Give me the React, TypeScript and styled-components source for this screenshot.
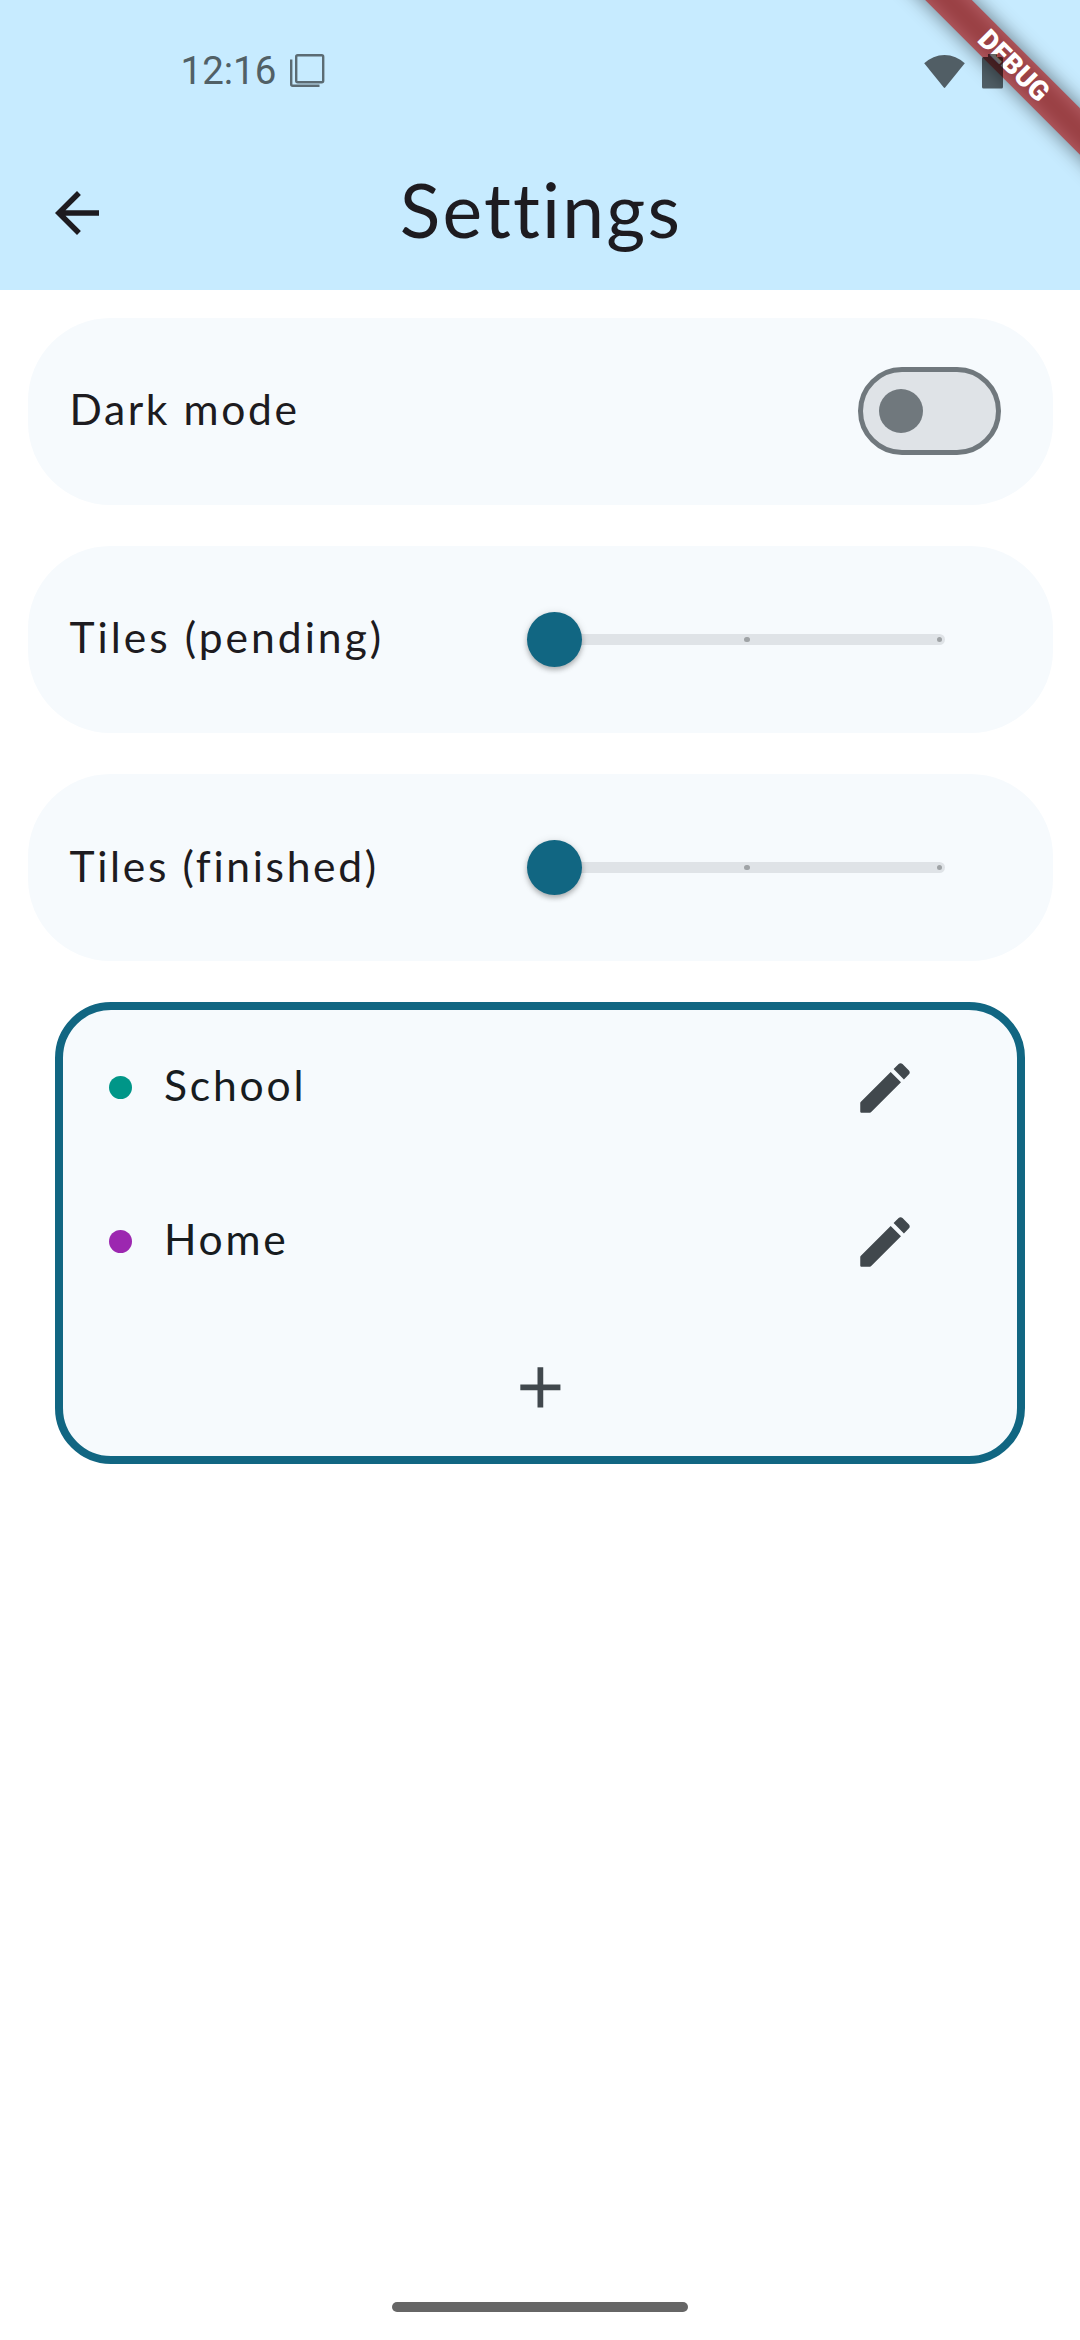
import React from 'react';
import styled, { createGlobalStyle } from 'styled-components';

const GlobalStyle = createGlobalStyle`
  *, *::before, *::after { box-sizing: border-box; }
  html, body { margin: 0; padding: 0; background: #fff; overflow: hidden; }
  svg { display: block; }
`;

const Screen = styled.div`
  position: relative;
  display: flex;
  flex-direction: column;
  width: 1080px;
  height: 2340px;
  overflow: hidden;
  background: #fff;
  font-family: Lato, 'Open Sans', sans-serif;
  color: #1d1b20;
`;

const Header = styled.header`
  height: 290px;
  background: #c7ebff;
  display: flex;
  flex-direction: column;
`;

const StatusBar = styled.div`
  height: 136px;
  padding: 5px 77px 0 180.5px;
  display: flex;
  align-items: center;
  justify-content: space-between;
`;

const StatusGroup = styled.div<{ $gap: number }>`
  display: flex;
  align-items: center;
  gap: ${(p) => p.$gap}px;
`;

const Clock = styled.span`
  font: 400 38.5px/46px Roboto, sans-serif;
  color: #516066;
`;

const StatusIcons = styled(StatusGroup)`
  position: relative;
  z-index: 3;
`;

const Toolbar = styled.div`
  height: 154px;
  padding: 0 44px;
  display: grid;
  grid-template-columns: 66px 1fr 66px;
  align-items: center;
`;

const IconButton = styled.button`
  display: flex;
  padding: 0;
  border: 0;
  background: none;
  color: inherit;
`;

const Title = styled.h1`
  margin: 0;
  padding: 0 0 8px 2px;
  text-align: center;
  font-size: 75px;
  line-height: 90px;
  font-weight: 400;
  letter-spacing: 2.2px;
`;

const Content = styled.main`
  display: flex;
  flex-direction: column;
  padding-top: 27.5px;
`;

const Card = styled.section`
  height: 187px;
  margin: 0 27.5px 41.25px;
  padding: 0 52px 0 42px;
  border-radius: 82.5px;
  background: #f6fafd;
  display: flex;
  align-items: center;
  justify-content: space-between;
`;

const Label = styled.span<{ $spacing: number }>`
  padding-bottom: 4px;
  font-size: 42.6px;
  line-height: 52px;
  letter-spacing: ${(p) => p.$spacing}px;
  white-space: nowrap;
`;

const Switch = styled.div`
  width: 143px;
  height: 88px;
  padding-left: 16.5px;
  border: 5.5px solid #70787d;
  border-radius: 44px;
  background: #dfe3e7;
  display: flex;
  align-items: center;
`;

const Knob = styled.span`
  width: 44px;
  height: 44px;
  border-radius: 50%;
  background: #70787d;
`;

const SliderTrack = styled.div`
  width: 398px;
  height: 11px;
  margin-right: 55.5px;
  padding-right: 2.75px;
  border-radius: 6px;
  background: #dfe3e7;
  display: flex;
  align-items: center;
  justify-content: space-between;
`;

const Thumb = styled.span`
  width: 55px;
  height: 55px;
  margin-left: -19.8px;
  border-radius: 50%;
  background: #116682;
  box-shadow: 0 3px 5px rgba(0, 0, 0, 0.24), 0 1px 8px rgba(0, 0, 0, 0.12);
`;

const Tick = styled.span`
  width: 5.5px;
  height: 5.5px;
  border-radius: 50%;
  background: #9fa3a6;
`;

const MiddleTick = styled(Tick)`
  margin-left: -25px;
`;

const CategoryBox = styled.section`
  height: 462px;
  margin: 0 55px;
  border: 8.25px solid #116682;
  border-radius: 56px;
  background: #f6fafd;
  color: #171c1f;
`;

const CategoryRow = styled.div`
  height: 154px;
  padding: 0 99.5px 0 46px;
  display: flex;
  align-items: center;
`;

const Dot = styled.span<{ $color: string }>`
  width: 23px;
  height: 23px;
  margin-right: 32px;
  border-radius: 50%;
  background: ${(p) => p.$color};
`;

const RowAction = styled(IconButton)`
  margin-left: auto;
  padding-top: 1.5px;
  color: #41484d;
`;

const AddRow = styled.div`
  height: 137px;
  padding-top: 2px;
  display: flex;
  justify-content: center;
  align-items: center;
  color: #41484d;
`;

const Ribbon = styled.div`
  position: absolute;
  z-index: 1;
  left: 864.2px;
  top: 49.3px;
  width: 300px;
  height: 33px;
  transform: rotate(45deg);
  color: #fff;
  font: 900 27.5px/33px Roboto, sans-serif;
  text-align: center;

  &::before {
    content: '';
    position: absolute;
    inset: 0;
    background: rgba(0, 0, 0, 0.5);
    filter: blur(10px);
  }
`;

const RibbonFace = styled.div`
  position: relative;
  background: rgba(183, 28, 28, 0.627);
`;

const GestureBar = styled.div`
  position: absolute;
  left: 392px;
  top: 2302px;
  width: 296px;
  height: 10px;
  border-radius: 5px;
  background: #666;
`;

const Glyph = ({ d, size = 66 }: { d: string; size?: number }) => (
  <svg width={size} height={size} viewBox="0 0 24 24" fill="currentColor">
    <path d={d} />
  </svg>
);

const ARROW_BACK = 'M20 11H7.83l5.59-5.59L12 4l-8 8 8 8 1.41-1.41L7.83 13H20v-2z';
const EDIT =
  'M3 17.46v3.04c0 .28.22.5.5.5h3.04c.13 0 .26-.05.35-.15L17.81 9.94l-3.75-3.75L3.15 17.1c-.1.1-.15.22-.15.36zM20.71 7.04c.39-.39.39-1.02 0-1.41l-2.34-2.34c-.39-.39-1.02-.39-1.41 0l-1.83 1.83 3.75 3.75 1.83-1.83z';
const ADD = 'M19 13h-6v6h-2v-6H5v-2h6V5h2v6h6v2z';

const SliderCard = ({ label, spacing }: { label: string; spacing: number }) => (
  <Card>
    <Label $spacing={spacing}>{label}</Label>
    <SliderTrack>
      <Thumb />
      <MiddleTick />
      <Tick />
    </SliderTrack>
  </Card>
);

const categories = [
  { name: 'School', color: '#009688', spacing: 2.8 },
  { name: 'Home', color: '#9c27b0', spacing: 2.7 },
];

export default function App() {
  return (
    <Screen>
      <GlobalStyle />
      <Header>
        <StatusBar>
          <StatusGroup $gap={13}>
            <Clock>12:16</Clock>
            <svg width="36" height="36" viewBox="0 0 36 36" fill="none" stroke="#5b6b73" strokeWidth="2.4">
              <rect x="7.2" y="2.2" width="27" height="27" rx="1.5" />
              <path d="M2.2 6.5v24.8q0 1.5 1.5 1.5H30.5" />
            </svg>
          </StatusGroup>
          <StatusIcons $gap={17.3}>
            <svg width="41" height="36" viewBox="0 0 41 36" fill="#515e65">
              <path d="M0.2 10.3A29 29 0 0 1 40.8 10.3L21.2 34.6Q20.5 35.4 19.8 34.6Z" />
            </svg>
            <svg width="21" height="36" viewBox="0 0 21 36" fill="rgba(0,0,0,0.6)">
              <path d="M6 1h9v3h4.5Q21 4 21 5.500V34Q21 35.500 19.500 35.500H1.500Q0 35.500 0 34V5.500Q0 4 1.500 4H6Z" />
            </svg>
          </StatusIcons>
        </StatusBar>
        <Toolbar>
          <IconButton aria-label="Back">
            <Glyph d={ARROW_BACK} />
          </IconButton>
          <Title>Settings</Title>
        </Toolbar>
      </Header>
      <Content>
        <Card>
          <Label $spacing={2.6}>Dark mode</Label>
          <Switch>
            <Knob />
          </Switch>
        </Card>
        <SliderCard label="Tiles (pending)" spacing={3} />
        <SliderCard label="Tiles (finished)" spacing={2.65} />
        <CategoryBox>
          {categories.map((c) => (
            <CategoryRow key={c.name}>
              <Dot $color={c.color} />
              <Label $spacing={c.spacing}>{c.name}</Label>
              <RowAction aria-label={`Edit ${c.name}`}>
                <Glyph d={EDIT} />
              </RowAction>
            </CategoryRow>
          ))}
          <AddRow>
            <IconButton aria-label="Add">
              <Glyph d={ADD} size={68.75} />
            </IconButton>
          </AddRow>
        </CategoryBox>
      </Content>
      <Ribbon>
        <RibbonFace>DEBUG</RibbonFace>
      </Ribbon>
      <GestureBar />
    </Screen>
  );
}
